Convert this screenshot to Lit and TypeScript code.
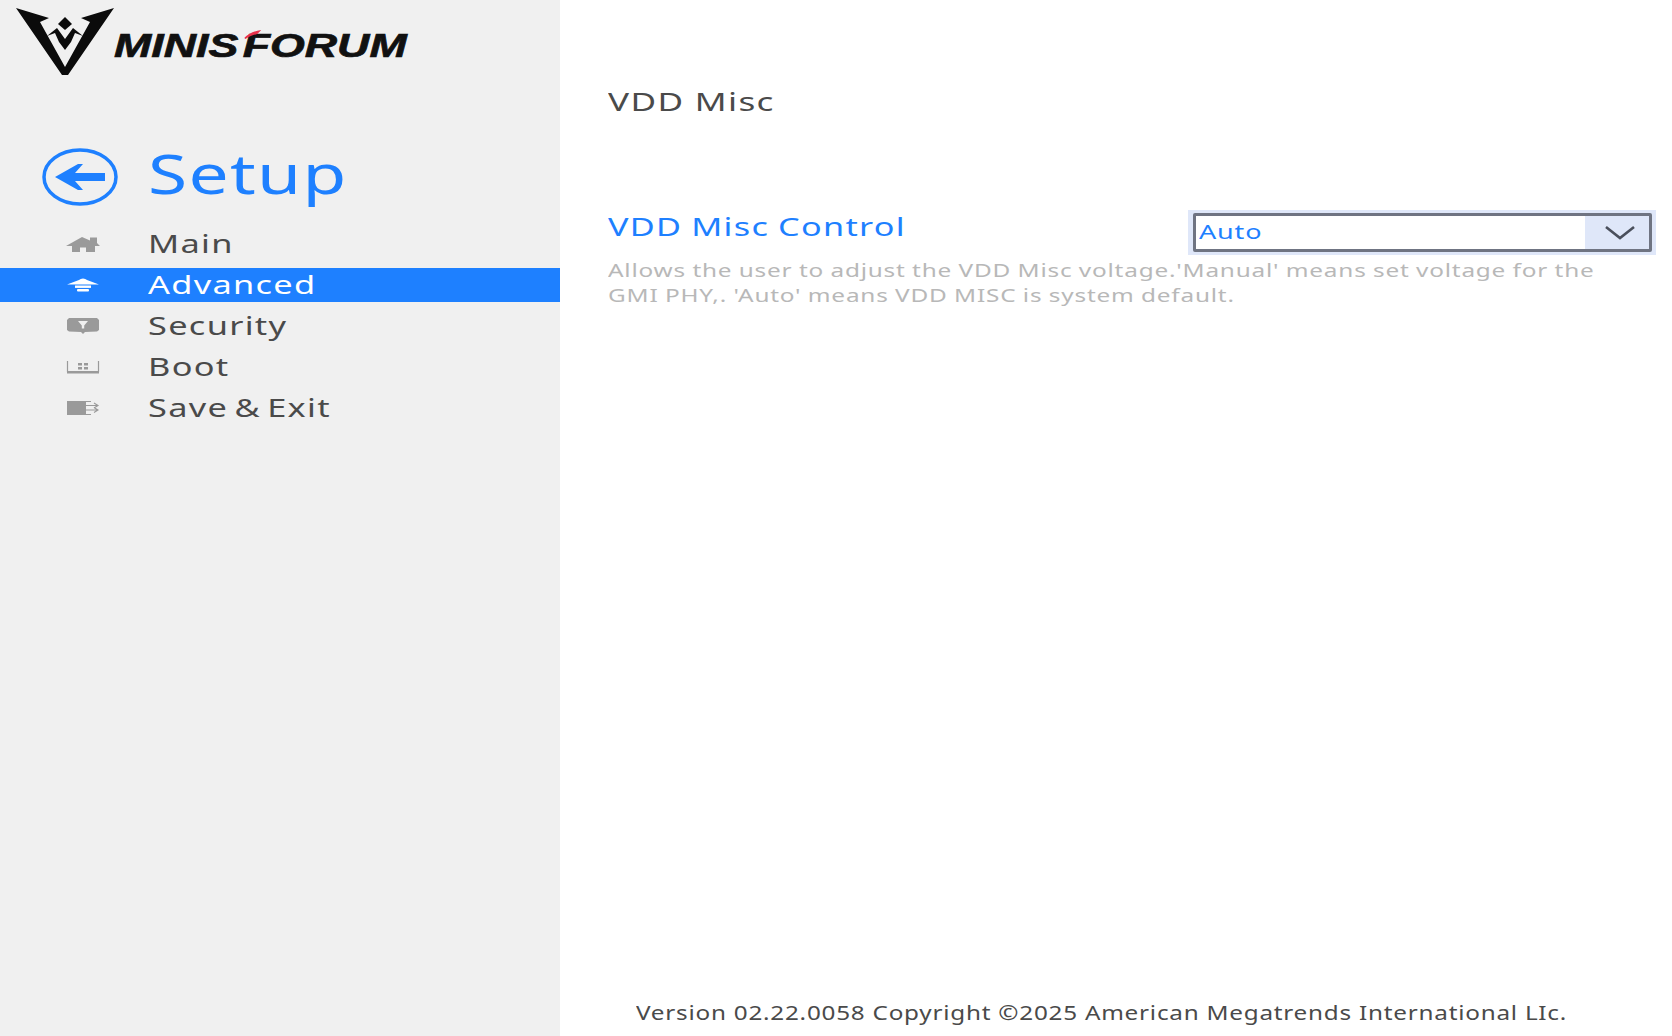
import { LitElement, html, css, svg } from "lit";
import { customElement } from "lit/decorators.js";

const icons: Record<string, unknown> = {
  Main: svg`<path d="M0 12 L16 3 L24 6.5 V3.5 H31 V9 L34 12 H29 V18 H20 V13.5 H14 V18 H6 V12 Z" fill="currentColor"/>`,
  Advanced: svg`<path d="M1 9.5 L13 5 A5 4 0 0 1 21 5 L33 9.5 Z" fill="currentColor"/><rect x="9" y="10.5" width="16" height="2.4" fill="currentColor"/><rect x="11" y="14" width="12" height="2.6" rx="1" fill="currentColor"/>`,
  Security: svg`<path d="M3 2 H31 L33 4 V14 L31 15.5 L19 16 L17 18 L15 16 L3 15.5 L1 14 V4 Z" fill="currentColor"/><path d="M12 5 H22 L18.2 9.5 V12.5 H15.8 V9.5 Z" fill="#f0f0f0"/>`,
  Boot: svg`<path d="M1.5 4 V14.5 H32.5 V4" fill="none" stroke="currentColor" stroke-width="1.2"/><rect x="1" y="14" width="32" height="2.5" fill="currentColor"/><path d="M12 6 H16 V8.5 H12 Z M18 6 H22 V8.5 H18 Z M12 10 H16 V12.5 H12 Z M18 10 H22 V12.5 H18 Z" fill="currentColor"/>`,
  "Save & Exit": svg`<path d="M1 3 H20 V17 H1 Z" fill="currentColor"/><path d="M20 3.5 H25 M20 16.5 H25 M20 7.5 H31 M20 12 H31 M28 5 L32 7.5 L28 10 M28 9.5 L32 12 L28 14.5" fill="none" stroke="currentColor" stroke-width="1.1"/>`,
};

const items = ["Main", "Advanced", "Security", "Boot", "Save & Exit"];

@customElement("app-root")
export class AppRoot extends LitElement {
  static styles = css`
    :host {
      display: flex;
      width: 1672px;
      height: 1036px;
      overflow: hidden;
      background: #fff;
      font-family: "Noto Sans", "Open Sans", sans-serif;
    }
    .wide {
      display: inline-block;
      transform-origin: left center;
      white-space: nowrap;
    }
    .side {
      width: 560px;
      flex: none;
      background: #f0f0f0;
      display: flex;
      flex-direction: column;
    }
    .logo {
      display: flex;
      align-items: flex-start;
      height: 146px;
      padding: 7px 0 0 16px;
      box-sizing: border-box;
    }
    .logo svg { flex: none; }
    .brand {
      margin: 18px 0 0 0;
      font: italic 700 34px/40px "Liberation Sans", sans-serif;
      color: #111;
      word-spacing: -6px;
      white-space: nowrap;
      -webkit-text-stroke: 0.7px #111;
      transform: scaleX(1.315);
      transform-origin: left center;
      position: relative;
    }
    .slash {
      position: absolute;
      left: 99px;
      top: 5px;
    }
    .setup {
      display: flex;
      align-items: center;
      height: 62px;
      padding-left: 42px;
      color: #1e80ff;
      font-size: 54px;
      line-height: 62px;
    }
    .setup svg { margin-right: 30px; flex: none; }
    .setup .wide { transform: scaleX(1.32); letter-spacing: 1px; position: relative; top: -4px; }
    nav {
      display: flex;
      flex-direction: column;
      gap: 7px;
      margin-top: 19px;
    }
    .item {
      display: flex;
      align-items: center;
      height: 34px;
      padding-left: 66px;
      color: #9a9a9a;
    }
    .item svg { flex: none; margin-right: 48px; }
    .item .wide {
      color: #4a4a4a;
      font-size: 26px;
      letter-spacing: 1px;
      word-spacing: -3px;
      line-height: 34px;
      padding-bottom: 3px;
      transform: scaleX(1.32);
    }
    .item.on { background: #1e80ff; color: #fff; }
    .item.on .wide { color: #fff; }
    .main {
      flex: 1;
      min-width: 0;
      display: flex;
      flex-direction: column;
      padding: 0 16px 0 48px;
    }
    h1 {
      margin: 81px 0 0;
      font-size: 26px;
      line-height: 40px;
      font-weight: 400;
      color: #4a4a4a;
    }
    h1 .wide { letter-spacing: 1px; transform: scaleX(1.35); }
    .row {
      display: flex;
      justify-content: space-between;
      align-items: flex-start;
      margin-top: 89px;
    }
    .label {
      color: #1e80ff;
      font-size: 26px;
      line-height: 32px;
    }
    .label .wide { letter-spacing: 1px; word-spacing: -1px; transform: scaleX(1.315); }
    .select {
      width: 468px;
      height: 45px;
      box-sizing: border-box;
      background: #dfe7f9;
      padding: 3px 4px 3px 5px;
    }
    .box {
      display: flex;
      height: 100%;
      box-sizing: border-box;
      border: 3px solid #6f7482;
      border-radius: 2px;
      background: #fff;
    }
    .value {
      flex: 1;
      color: #1e80ff;
      font-size: 19px;
      line-height: 33px;
      padding-left: 3px;
    }
    .value .wide { letter-spacing: 0.6px; transform: scaleX(1.42); }
    .arrow {
      width: 64px;
      padding-left: 6px;
      box-sizing: border-box;
      background: #dfe7f9;
      display: flex;
      align-items: center;
      justify-content: center;
    }
    .desc {
      margin: 2px 0 0;
      color: #b8b8b8;
      font-size: 18.6px;
      line-height: 25px;
    }
    .desc .wide { display: block; letter-spacing: 0.6px; word-spacing: -0.5px; transform: scaleX(1.31); }
    .foot {
      margin-top: auto;
      margin-bottom: 8px;
      padding-left: 28px;
      color: #4a4a4a;
      font-size: 19px;
      line-height: 30px;
    }
    .foot .wide { letter-spacing: 0.6px; transform: scaleX(1.277); }
  `;

  render() {
    return html`
      <aside class="side">
        <div class="logo">
          <svg width="98" height="70" viewBox="0 0 98 70">
            <path d="M0 1 L33 11 L24 15 L49 60 L74 15 L65 11 L98 1 L52 68 H46 Z" fill="#0b0b0b"/>
            <path d="M49 10 L56 17 L49 23 L42 17 Z" fill="#0b0b0b"/>
            <path d="M31 29 L41 21 L49 32 L57 21 L67 29 L59 26 L55 35 L49 43 L43 35 L39 26 Z" fill="#0b0b0b"/>
          </svg>
          <div class="brand">MINIS FORUM<svg class="slash" width="13" height="9" viewBox="0 0 13 9"><path d="M0 8 C3 4 7 1 13 0 L10 4 C7 5 4 6 1 9 Z" fill="#e8304a"/></svg></div>
        </div>
        <div class="setup">
          <svg width="76" height="58" viewBox="0 0 76 58">
            <ellipse cx="38" cy="29" rx="36" ry="27" fill="none" stroke="#1e80ff" stroke-width="3.5"/>
            <path d="M13 29 L36 16 H41 L33 25 H63 V33 H33 L41 42 H36 Z" fill="#1e80ff"/>
          </svg>
          <span class="wide">Setup</span>
        </div>
        <nav>
          ${items.map(
            (t) => html`<div class="item ${t === "Advanced" ? "on" : ""}">
              <svg width="34" height="20" viewBox="0 0 34 20">${icons[t]}</svg>
              <span class="wide">${t}</span>
            </div>`
          )}
        </nav>
      </aside>
      <main class="main">
        <h1><span class="wide">VDD Misc</span></h1>
        <div class="row">
          <div class="label"><span class="wide">VDD Misc Control</span></div>
          <div class="select">
            <div class="box">
              <div class="value"><span class="wide">Auto</span></div>
              <div class="arrow">
                <svg width="32" height="16" viewBox="0 0 32 16"><path d="M2 2 L16 13 L30 2" fill="none" stroke="#4a4f5c" stroke-width="2.6"/></svg>
              </div>
            </div>
          </div>
        </div>
        <div class="desc">
          <span class="wide">Allows the user to adjust the VDD Misc voltage.'Manual' means set voltage for the</span>
          <span class="wide">GMI PHY,. 'Auto' means VDD MISC is system default.</span>
        </div>
        <div class="foot"><span class="wide">Version 02.22.0058 Copyright ©2025 American Megatrends International LIc.</span></div>
      </main>
    `;
  }
}
